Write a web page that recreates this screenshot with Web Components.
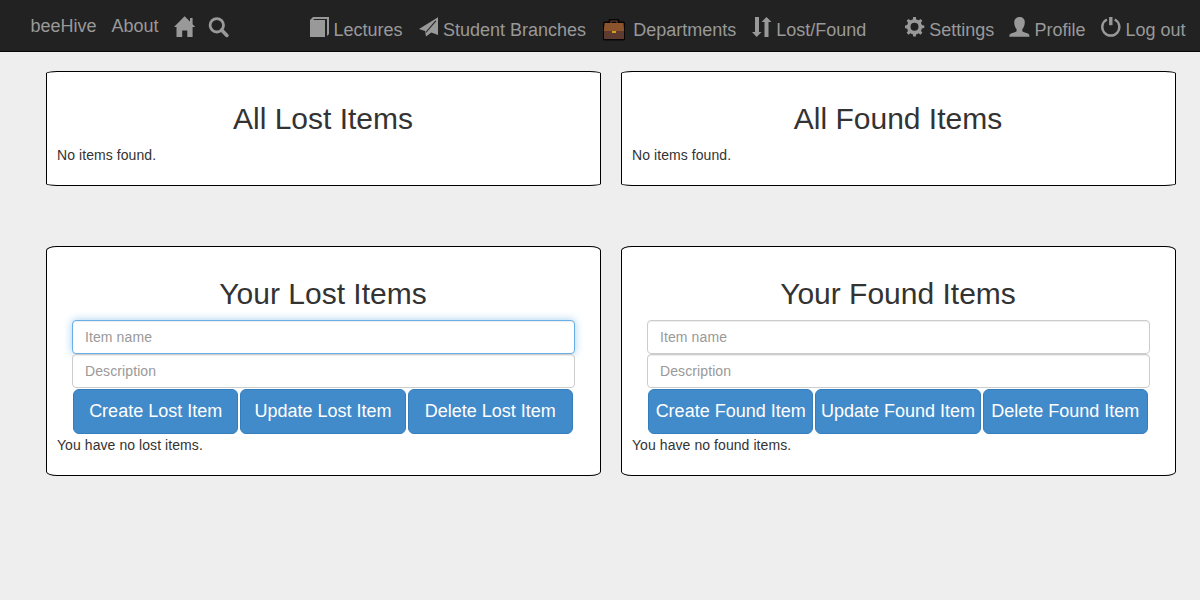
<!DOCTYPE html>
<html lang="en">
<head>
<meta charset="utf-8">
<title>beeHive</title>
<style>
body{margin:0;min-height:600px;background:#eee;color:#333;font:14px/20px "Liberation Sans",Arial,sans-serif}
</style>
</head>
<body>
<bee-page></bee-page>
<script>
const ICONS = {
  home: '<svg width="22" height="22" viewBox="0 0 22 22"><path d="M10.6.3 16 5.6V2h2.6v6.3l2.7 2.8h-2.7V21h-5.3v-6.6H8.2V21H2.5v-9.9H0z" fill="#999"/></svg>',
  search: '<svg width="22" height="22" viewBox="0 0 22 22"><circle cx="8.8" cy="8.3" r="6.7" fill="none" stroke="#999" stroke-width="2.8"/><path d="m13.6 13.1 5.3 5.3" stroke="#999" stroke-width="3.6" stroke-linecap="round"/></svg>',
  book: '<svg width="20" height="20" viewBox="0 0 20 20"><path d="M0 3 3 0h16v17l-2 2V2H4.2L3.2 3H15v17H0z" fill="#999"/></svg>',
  plane: '<svg width="20" height="20" viewBox="0 0 20 20"><path d="M19 .2V17.9l-6.700-2.400L7 19.400 6 14 0 11.900z" fill="#999"/><path d="M6.800 15.500 16.800 3.800" stroke="#222" stroke-width="1.100"/></svg>',
  case: '<svg width="23" height="22" viewBox="0 0 23 22"><path d="M7 4V2q0-1.3 1.3-1.3h5.4Q15 .7 15 2v2" fill="none" stroke="#080504" stroke-width="3"/><rect x="0" y="2.5" width="22" height="19" rx="1.5" fill="#080504"/><path d="M8 4V2h6v2" fill="none" stroke="#6b4030" stroke-width="1.2"/><path d="M1 12h20v8H1z" fill="#5d3b31"/><path d="M1.5 4h19l.7 8H.8z" fill="#8b542c"/><path d="M9 12h4v2H9z" fill="#d4a017"/></svg>',
  sort: '<svg width="20" height="20" viewBox="0 0 20 20"><path d="M3 0h4v15h2.500L4.700 20 0 15h3zM12.500 20V5h-3l5-5 5 5h-3v15z" fill="#999"/></svg>',
  gear: '<svg width="20" height="20" viewBox="0 0 20 20"><g fill="#999">' +
    [0, 45, 90, 135, 180, 225, 270, 315].map(a => `<path d="M7.5 4 8.2 0h2.6l.7 4z" transform="rotate(${a} 9.5 9.8)"/>`).join('') +
    '</g><circle cx="9.5" cy="9.8" r="5.8" fill="none" stroke="#999" stroke-width="3.6"/></svg>',
  user: '<svg width="21" height="20" viewBox="0 0 21 20"><path d="M10.5 0C13.7 0 15.8 2 15.8 5.2c0 3-1.2 5.6-2.5 7v1.5c0 .7.5 1 1.2 1.3l4.3 1.6c1.2.5 1.7 1.2 1.7 3.2H.3c0-2 .5-2.7 1.7-3.2L6.4 15c.7-.3 1.2-.6 1.2-1.3v-1.5c-1.3-1.4-2.4-4-2.4-7C5.2 2 7.3 0 10.5 0z" fill="#999"/></svg>',
  power: '<svg width="20" height="20" viewBox="0 0 20 20"><path d="M5.9 2.500a8.500 8.500 0 1 0 7.800 0" fill="none" stroke="#999" stroke-width="2.500"/><path d="M8.100 0h3.400v8.200H8.100z" fill="#999"/></svg>'
};

class BeeIcon extends HTMLElement {
  connectedCallback() {
    this.attachShadow({mode: 'open'}).innerHTML =
      `<style>:host{display:block;flex:none}svg{display:block}</style>${ICONS[this.getAttribute('name')]}`;
  }
}
customElements.define('bee-icon', BeeIcon);

class NavItem extends HTMLElement {
  connectedCallback() {
    const icon = this.getAttribute('icon');
    this.attachShadow({mode: 'open'}).innerHTML = `
      <style>
        :host{display:flex;align-items:flex-start;flex:none;box-sizing:border-box;white-space:nowrap}
        bee-icon{width:var(--icon-w,24px);margin-top:var(--icon-top,-3px)}
      </style>
      ${icon ? `<bee-icon name="${icon}"></bee-icon>` : ''}<slot></slot>`;
  }
}
customElements.define('nav-item', NavItem);

class NavBar extends HTMLElement {
  connectedCallback() {
    this.attachShadow({mode: 'open'}).innerHTML = `
      <style>
        :host{display:block;height:52px;box-sizing:border-box;background:#222;border-bottom:1px solid #080808;color:#999;font-size:18px;line-height:20px}
        nav{display:flex;align-items:flex-start;padding:20px 0 0 30px}
        .brand{margin-top:-4px;padding-left:.5px}
      </style>
      <nav>
        <nav-item class="brand" style="width:81px">beeHive</nav-item>
        <nav-item class="brand" style="width:63px">About</nav-item>
        <nav-item icon="home" style="width:34px;--icon-top:-4px"></nav-item>
        <nav-item icon="search" style="width:102px"></nav-item>
        <nav-item icon="book" style="width:109px;--icon-w:23.5px">Lectures</nav-item>
        <nav-item icon="plane" style="width:184px">Student Branches</nav-item>
        <nav-item icon="case" style="width:149px;--icon-w:30.3px;--icon-top:-1px">Departments</nav-item>
        <nav-item icon="sort" style="width:153px;--icon-w:24.3px">Lost/Found</nav-item>
        <nav-item icon="gear" style="width:104px;--icon-w:24.3px">Settings</nav-item>
        <nav-item icon="user" style="width:92px;--icon-w:25.5px">Profile</nav-item>
        <nav-item icon="power" style="--icon-w:24.5px">Log out</nav-item>
      </nav>`;
  }
}
customElements.define('nav-bar', NavBar);

class ItemPanel extends HTMLElement {
  connectedCallback() {
    this.attachShadow({mode: 'open'}).innerHTML = `
      <style>
        :host{display:block;box-sizing:border-box;padding:10px;background:#fff;border:1px solid #000;border-radius:2%}
        h2{margin:20px 1px 10px 0;font-size:30px;line-height:33px;font-weight:500;text-align:center}
        p{margin:0 0 10px;letter-spacing:.07px}
      </style>
      <h2>${this.getAttribute('heading')}</h2>
      <slot name="form"></slot>
      <p><slot></slot></p>`;
  }
}
customElements.define('item-panel', ItemPanel);

class ItemForm extends HTMLElement {
  connectedCallback() {
    const kind = this.getAttribute('kind');
    this.attachShadow({mode: 'open'}).innerHTML = `
      <style>
        :host{display:block;padding:0 15px}
        input{display:block;width:100%;height:34px;box-sizing:border-box;margin:0;padding:6px 12px;border:1px solid #ccc;border-radius:4px;background:#fff;color:#555;font:inherit;letter-spacing:.1px;box-shadow:inset 0 1px 1px rgba(0,0,0,.075);outline:0}
        input::placeholder{color:#999;opacity:1}
        :host([active]) .name{border-color:#66afe9;box-shadow:inset 0 1px 1px rgba(0,0,0,.075),0 0 8px rgba(102,175,233,.6)}
        div{display:grid;grid-template-columns:repeat(3,1fr);gap:2px;padding:1px 2px 1px 1px}
        button{height:45px;min-width:0;margin:0;padding:0 0 2px;border:1px solid #357ebd;border-radius:6px;background:#428bca;color:#fff;font:18px/24px "Liberation Sans",Arial,sans-serif;white-space:nowrap}
      </style>
      <input class="name" placeholder="Item name"><input placeholder="Description">
      <div><button>Create ${kind} Item</button><button>Update ${kind} Item</button><button>Delete ${kind} Item</button></div>`;
  }
}
customElements.define('item-form', ItemForm);

class BeePage extends HTMLElement {
  connectedCallback() {
    this.attachShadow({mode: 'open'}).innerHTML = `
      <style>
        :host{display:block}
        main{display:grid;grid-template-columns:555px 555px;grid-template-rows:115px 230px;gap:60px 20px;padding:19px 0 0 46px}
      </style>
      <nav-bar></nav-bar>
      <main>
        <item-panel heading="All Lost Items">No items found.</item-panel>
        <item-panel heading="All Found Items">No items found.</item-panel>
        <item-panel heading="Your Lost Items"><item-form slot="form" kind="Lost" active></item-form>You have no lost items.</item-panel>
        <item-panel heading="Your Found Items"><item-form slot="form" kind="Found"></item-form>You have no found items.</item-panel>
      </main>`;
  }
}
customElements.define('bee-page', BeePage);
</script>
</body>
</html>
